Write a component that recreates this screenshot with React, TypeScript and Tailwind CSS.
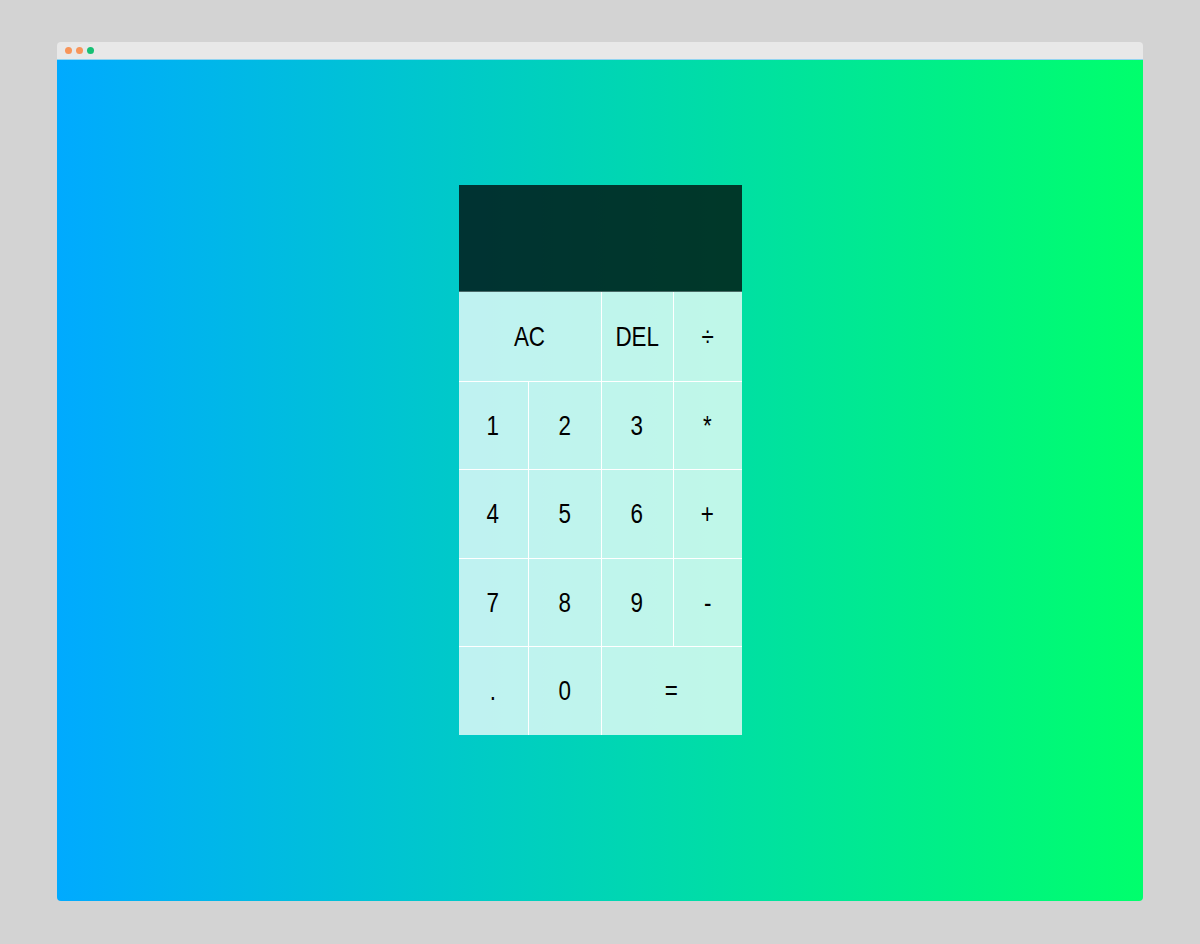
import React from "react";

type Btn = { label: string; span?: number; r: boolean; b: boolean };

const rows: Btn[][] = [
  [
    { label: "AC", span: 2, r: true, b: true },
    { label: "DEL", r: true, b: true },
    { label: "÷", r: false, b: true },
  ],
  [
    { label: "1", r: true, b: true },
    { label: "2", r: true, b: true },
    { label: "3", r: true, b: true },
    { label: "*", r: false, b: true },
  ],
  [
    { label: "4", r: true, b: true },
    { label: "5", r: true, b: true },
    { label: "6", r: true, b: true },
    { label: "+", r: false, b: true },
  ],
  [
    { label: "7", r: true, b: true },
    { label: "8", r: true, b: true },
    { label: "9", r: true, b: true },
    { label: "-", r: false, b: true },
  ],
  [
    { label: ".", r: true, b: false },
    { label: "0", r: true, b: false },
    { label: "=", span: 2, r: false, b: false },
  ],
];

export default function App() {
  return (
    <div className="w-[1200px] h-[944px] bg-[#d3d3d3] pt-[42px] pl-[57px] font-['Liberation_Sans',Arial,sans-serif]">
      <div className="w-[1086px] h-[859px] rounded-[4px] overflow-hidden flex flex-col">
        <div className="h-[18px] bg-[#e8e8e8] flex items-center gap-[4px] pl-[8px] border-b border-[#8fd3f0]">
          <span className="w-[7px] h-[7px] rounded-full bg-[#f7955a]" />
          <span className="w-[7px] h-[7px] rounded-full bg-[#f7955a]" />
          <span className="w-[7px] h-[7px] rounded-full bg-[#16c074]" />
        </div>
        <div className="flex-1 bg-[linear-gradient(to_right,#00aaff,#00ff6c)] flex justify-center pt-[125px]">
          <div className="grid grid-cols-[70px_73px_72px_68px] grid-rows-[107px_90px_88px_89px_88px_88px] w-[283px] h-[550px]">
            <div className="col-span-4 bg-[rgba(0,0,0,0.75)] border-b border-[rgba(120,140,140,0.6)]" />
            {rows.flat().map((btn, i) => (
              <div
                key={i}
                className={[
                  "bg-[rgba(255,255,255,0.75)] border-white flex items-center justify-center text-[28px] text-black leading-none",
                  btn.span === 2 ? "col-span-2" : "",
                  btn.r ? "border-r" : "",
                  btn.b ? "border-b" : "",
                ].join(" ")}
              >
                <span className="inline-block scale-x-[0.8]">{btn.label}</span>
              </div>
            ))}
          </div>
        </div>
      </div>
    </div>
  );
}
